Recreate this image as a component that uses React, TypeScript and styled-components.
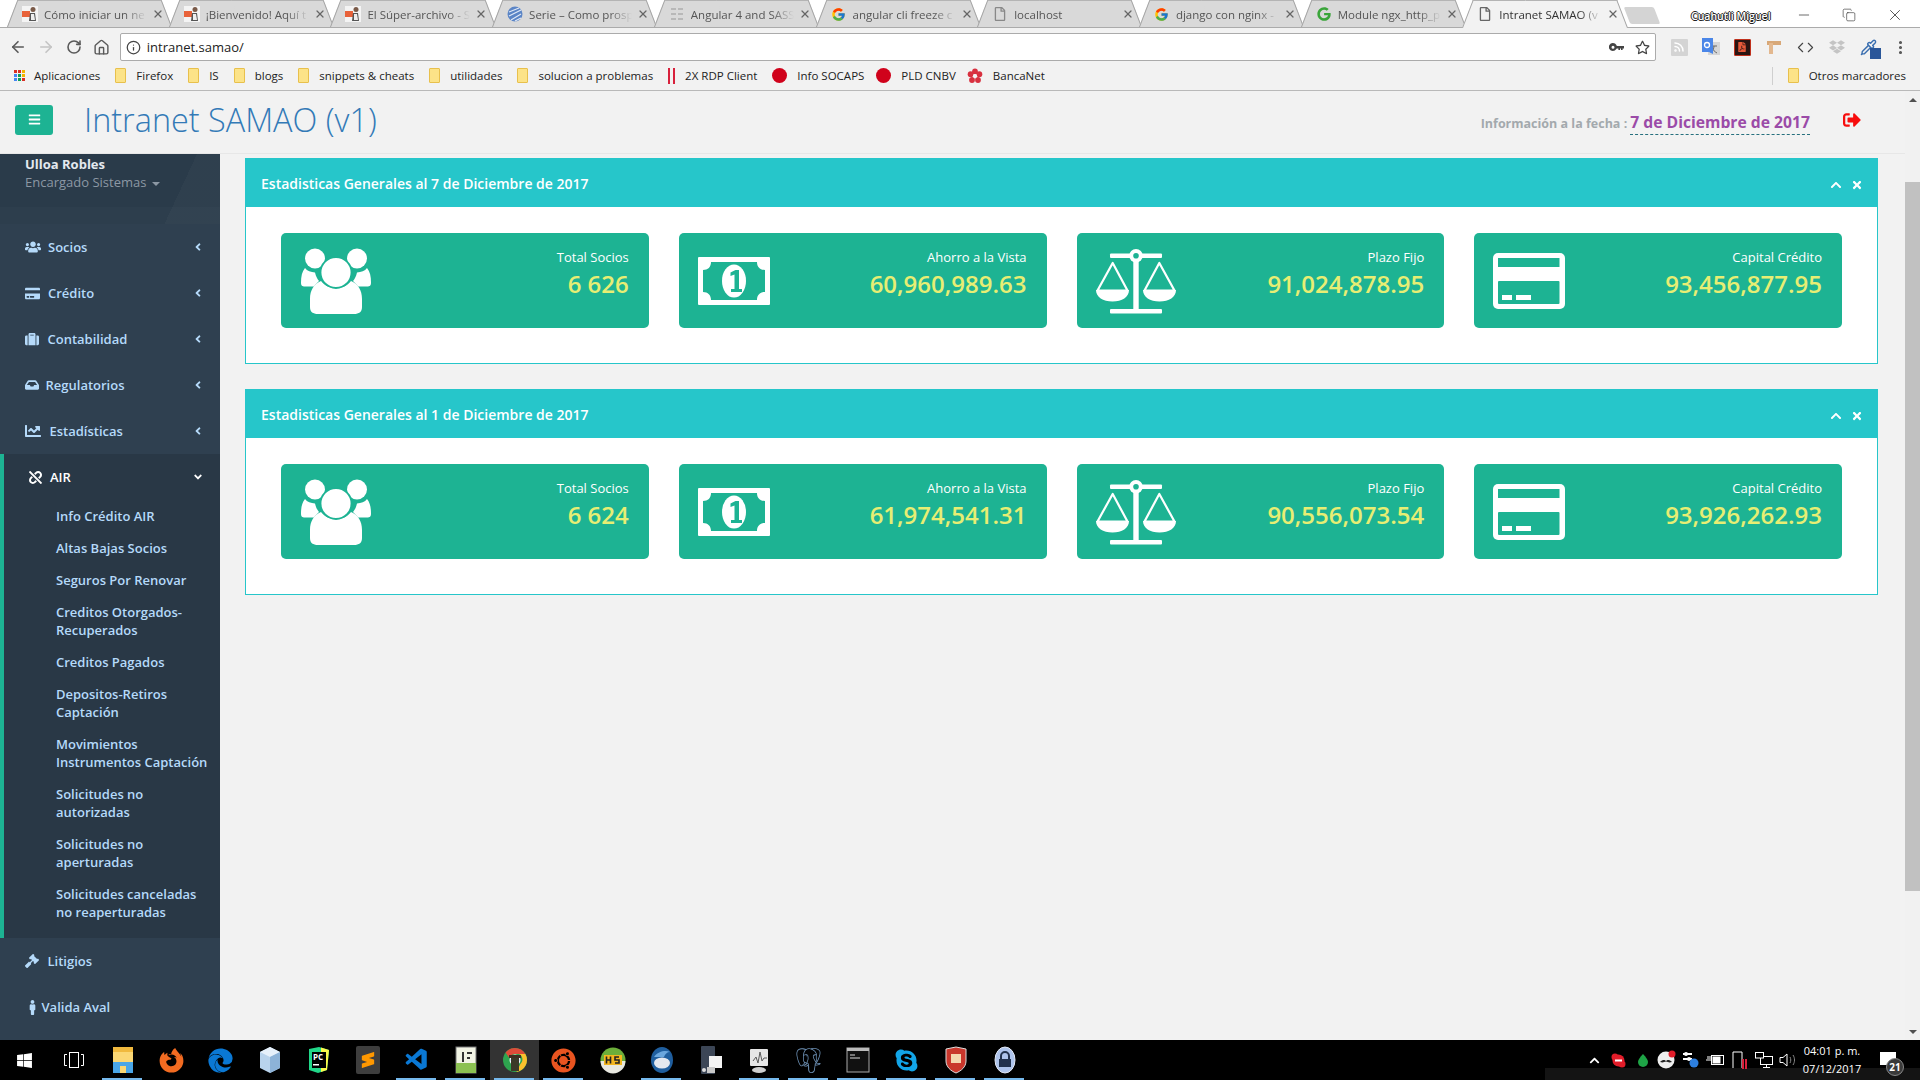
import { ReactNode } from "react";
import styled, { createGlobalStyle } from "styled-components";
import {
  ArrowLeft,
  ArrowRight,
  Code,
  Copy,
  EllipsisVertical,
  House,
  Info,
  Minus,
  Pipette,
  RotateCw,
  Rss,
  X,
} from "lucide-react";
import {
  FaAngleDown,
  FaAngleLeft,
  FaBars,
  FaChartLine,
  FaChevronUp,
  FaCreditCard,
  FaDropbox,
  FaEdge,
  FaFilePdf,
  FaFirefoxBrowser,
  FaGavel,
  FaGoogle,
  FaInbox,
  FaMale,
  FaRegFile,
  FaRegStar,
  FaSignOutAlt,
  FaSkype,
  FaSuitcase,
  FaTimes,
  FaUbuntu,
  FaUnlink,
  FaUsers,
  FaWindows,
} from "react-icons/fa";
import { FcGoogle } from "react-icons/fc";
import { SiPostgresql, SiSublimetext } from "react-icons/si";
import { VscVscode } from "react-icons/vsc";

const TEAL = "#26c6ca";
const GREEN = "#1db393";
const NAV = "#2f4050";
const NAV_DARK = "#293846";

const GlobalStyle = createGlobalStyle`
  html, body {
    margin: 0;
    padding: 0;
    height: 100%;
    overflow: hidden;
    background: #f2f2f2;
  }
  * {
    box-sizing: border-box;
  }
`;

const Screen = styled.div`
  display: flex;
  flex-direction: column;
  width: 1920px;
  height: 1080px;
  overflow: hidden;
  font-family: "Open Sans", "Noto Sans", sans-serif;
`;

/* ---- browser chrome ---- */

const TabStrip = styled.div`
  display: flex;
  align-items: flex-end;
  height: 28px;
  padding-left: 7px;
  background: linear-gradient(#fff 27px, #ababab 27px);
  flex: none;
`;

const Tab = styled.div<{ $active?: boolean }>`
  position: relative;
  display: flex;
  align-items: center;
  flex: none;
  width: 165px;
  height: 28px;
  margin-right: -3.3px;
  padding: 0 8px 0 15px;
  z-index: ${(p) => (p.$active ? 2 : 1)};

  &::before,
  &::after {
    content: "";
    position: absolute;
    top: 0;
    bottom: ${(p) => (p.$active ? "0" : "1px")};
    width: 55%;
    background: ${(p) => (p.$active ? "#f2f2f2" : "#d9d9d9")};
    border-top: 1px solid #b4b4b4;
    z-index: -1;
  }
  &::before {
    left: 0;
    border-left: 1px solid #a4a4a4;
    transform-origin: bottom left;
    transform: skewX(-21deg);
  }
  &::after {
    right: 0;
    border-right: 1px solid #a4a4a4;
    transform-origin: bottom right;
    transform: skewX(21deg);
  }
`;

const Favicon = styled.span`
  display: flex;
  align-items: center;
  justify-content: center;
  flex: none;
  width: 16px;
  height: 16px;
  margin-right: 6px;
`;

const TabTitle = styled.span<{ $active?: boolean }>`
  flex: 1;
  min-width: 0;
  overflow: hidden;
  white-space: nowrap;
  font-size: 11.5px;
  color: ${(p) => (p.$active ? "#333" : "#555")};
  -webkit-mask-image: linear-gradient(to right, #000 78%, transparent 100%);
  mask-image: linear-gradient(to right, #000 78%, transparent 100%);
`;

const TabClose = styled.span`
  display: flex;
  flex: none;
  width: 12px;
  margin-left: 5px;
  color: #666;
`;

const NewTab = styled.div`
  flex: none;
  width: 30px;
  height: 17px;
  margin: 0 0 4px 3px;
  background: #d4d4d4;
  border-radius: 2px;
  transform: skewX(21deg);
`;

const UserName = styled.div`
  margin-left: 34px;
  margin-bottom: 5px;
  width: 78px;
  font-size: 10.5px;
  font-weight: 600;
  color: #fff;
  white-space: nowrap;
  text-shadow: 1px 0 0 #222, -1px 0 0 #222, 0 1px 0 #222, 0 -1px 0 #222;
`;

const WindowButtons = styled.div`
  display: flex;
  align-items: center;
  height: 27px;
  margin-left: 27px;
  gap: 30px;
  color: #222;
`;

const Toolbar = styled.div`
  display: flex;
  align-items: center;
  height: 34px;
  padding: 4px 4px 0 4px;
  background: #f2f2f2;
  flex: none;
`;

const NavButton = styled.span<{ $dim?: boolean }>`
  display: flex;
  justify-content: center;
  width: 28px;
  color: ${(p) => (p.$dim ? "#c4c4c4" : "#5a5a5a")};
`;

const AddressBar = styled.div`
  display: flex;
  align-items: center;
  width: 1540px;
  height: 28px;
  margin-left: 4px;
  padding: 0 5px 0 5px;
  background: #fff;
  border: 1px solid #ababab;
  border-radius: 2px;
`;

const Url = styled.span`
  flex: 1;
  margin-left: 6px;
  font-size: 13px;
  color: #222;
`;

const StarSlot = styled.span`
  display: flex;
  margin-left: 11px;
  color: #444;
`;

const Extensions = styled.div`
  display: flex;
  align-items: center;
  margin-left: 7px;
`;

const ExtensionSlot = styled.span`
  position: relative;
  display: flex;
  align-items: center;
  justify-content: center;
  width: 31.6px;
  height: 24px;
`;

const ExtensionTile = styled.span<{ $bg: string; $edge?: string }>`
  display: flex;
  align-items: center;
  justify-content: center;
  width: 17px;
  height: 17px;
  background: ${(p) => p.$bg};
  border: ${(p) => (p.$edge ? `1px solid ${p.$edge}` : "none")};
  border-radius: 1px;
  color: #fff;
  font-size: 10px;
  font-weight: 700;
`;

const ExtensionBadge = styled.span`
  position: absolute;
  right: 3px;
  bottom: 0;
  width: 11px;
  height: 11px;
  background: #2a5699;
`;

const Bookmarks = styled.div`
  display: flex;
  align-items: center;
  height: 29px;
  padding: 0 14px 1px 14px;
  gap: 15px;
  background: #f2f2f2;
  border-bottom: 1px solid #b9b9b9;
  flex: none;
`;

const BookmarkItem = styled.span<{ $pull?: number }>`
  display: flex;
  align-items: center;
  gap: 10px;
  margin-left: ${(p) => -(p.$pull ?? 0)}px;
  font-size: 11.5px;
  color: #222;
  white-space: nowrap;
`;

const FolderIcon = styled.span`
  position: relative;
  flex: none;
  width: 11px;
  height: 15px;
  background: #fce388;
  border: 1px solid #e8c04c;
  border-radius: 1px;
`;

const AppsGrid = styled.span`
  display: grid;
  grid-template-columns: repeat(3, 3px);
  grid-auto-rows: 3px;
  gap: 1px;
  margin-right: -1px;
`;

const AppsDot = styled.span<{ $color: string }>`
  background: ${(p) => p.$color};
`;

const RedBars = styled.span`
  flex: none;
  width: 7px;
  height: 16px;
  border-left: 2px solid #d8213c;
  border-right: 2px solid #d8213c;
`;

const RedDot = styled.span`
  flex: none;
  width: 15px;
  height: 15px;
  border-radius: 50%;
  background: #d0021b;
`;

const BookmarkSpacer = styled.span`
  flex: 1;
`;

const BookmarkDivider = styled.span`
  width: 1px;
  height: 18px;
  background: #cfcfcf;
`;

/* ---- page ---- */

const Page = styled.div`
  display: flex;
  flex: 1;
  min-height: 0;
  background: #f2f2f2;
`;

const Content = styled.div`
  display: flex;
  flex-direction: column;
  flex: 1;
  min-width: 0;
`;

const TopBar = styled.header`
  display: flex;
  align-items: center;
  height: 63px;
  padding: 0 44px 0 15px;
  border-bottom: 1px solid #e7e7e7;
  flex: none;
`;

const MenuButton = styled.button`
  display: flex;
  align-items: center;
  justify-content: center;
  width: 38px;
  height: 30px;
  margin-top: -5px;
  padding: 0;
  border: none;
  border-radius: 3px;
  background: ${GREEN};
  color: #fff;
`;

const AppTitle = styled.h1`
  flex: 1;
  margin: -7px 0 0 31px;
  font-size: 32.4px;
  font-weight: 300;
  color: #337ab7;
`;

const DateLabel = styled.span`
  margin: 2px 3px 0 0;
  font-size: 12.5px;
  font-weight: 700;
  color: #a3a9ad;
`;

const DateValue = styled.a`
  margin-top: 2px;
  padding-bottom: 1px;
  font-size: 15.7px;
  font-weight: 700;
  color: #9b4ba8;
  border-bottom: 1px dashed #27707e;
`;

const Logout = styled.span`
  display: flex;
  margin: -5px 0 0 33px;
  color: #f70d0d;
`;

const Body = styled.div`
  display: flex;
  flex: 1;
  min-height: 0;
`;

const Sidebar = styled.nav`
  flex: none;
  width: 220px;
  overflow: hidden;
  background: ${NAV};
`;

const Profile = styled.div`
  height: 70px;
  padding: 1px 25px 0;
  background:
    linear-gradient(115deg, transparent 78%, rgba(255, 255, 255, 0.025) 78%),
    linear-gradient(#2a3b4a 53px, #2d3e4d 53px);
`;

const ProfileName = styled.div`
  font-size: 13px;
  line-height: 18px;
  font-weight: 700;
  color: #e4e9ef;
`;

const ProfileRole = styled.div`
  display: flex;
  align-items: center;
  gap: 6px;
  font-size: 13px;
  line-height: 19px;
  color: #8c98a4;
`;

const Caret = styled.span`
  width: 0;
  height: 0;
  margin-top: 2px;
  border-left: 4px solid transparent;
  border-right: 4px solid transparent;
  border-top: 4px solid #8c98a4;
`;

const MenuRow = styled.div<{ $open?: boolean }>`
  display: flex;
  align-items: center;
  height: 46px;
  padding: 0 16px 0 25px;
  font-size: 13px;
  font-weight: 600;
  color: ${(p) => (p.$open ? "#fff" : "#b5dafa")};
`;

const MenuIcon = styled.span<{ $width: number }>`
  display: flex;
  align-items: center;
  flex: none;
  width: ${(p) => p.$width}px;
`;

const MenuLabel = styled.span`
  flex: 1;
`;

const OpenGroup = styled.div`
  padding-bottom: 10px;
  background: ${NAV_DARK};
  border-left: 4px solid ${GREEN};
`;

const SubItem = styled.div`
  padding: 7px 6px 7px 52px;
  font-size: 13px;
  line-height: 18px;
  font-weight: 600;
  color: #b5dafa;
`;

const Main = styled.main`
  flex: 1;
  min-width: 0;
  padding: 4px 27px 0 25px;
`;

const Panel = styled.section`
  margin-bottom: 25px;
  background: #fff;
  border: 1px solid ${TEAL};
  border-top: none;
`;

const PanelHead = styled.div`
  display: flex;
  align-items: center;
  height: 49px;
  margin: 0 -1px;
  padding: 2px 15px 0 16px;
  background: ${TEAL};
  color: #fff;
`;

const PanelTitle = styled.h2`
  flex: 1;
  margin: 0;
  font-size: 14px;
  font-weight: 600;
`;

const PanelTool = styled.span`
  display: flex;
  margin-left: 9px;
  padding-top: 3px;
`;

const CardGrid = styled.div`
  display: grid;
  grid-template-columns: repeat(4, 1fr);
  gap: 30px;
  padding: 26px 35px 35px;
`;

const StatCard = styled.div`
  display: flex;
  align-items: center;
  justify-content: space-between;
  height: 95px;
  padding: 0 20px 0 19px;
  background: ${GREEN};
  border-radius: 5px;
`;

const StatText = styled.div`
  padding-bottom: 14px;
  text-align: right;
`;

const StatLabel = styled.div`
  font-size: 13px;
  line-height: 18px;
  color: #fff;
`;

const StatValue = styled.div`
  margin-top: 2px;
  font-size: 24px;
  line-height: 32px;
  font-weight: 600;
  color: #e7ee73;
`;

const Scrollbar = styled.div`
  display: flex;
  flex-direction: column;
  align-items: center;
  flex: none;
  width: 15px;
  padding-top: 7px;
  background: #f1f1f1;
`;

const ScrollArrow = styled.span<{ $down?: boolean }>`
  width: 0;
  height: 0;
  border-left: 4px solid transparent;
  border-right: 4px solid transparent;
  border-${(p) => (p.$down ? "top" : "bottom")}: 4px solid #505050;
`;

const ScrollThumb = styled.div`
  width: 15px;
  height: 709px;
  margin: 80px 0 139px;
  background: #c1c1c1;
`;

/* ---- taskbar ---- */

const Taskbar = styled.footer`
  display: flex;
  align-items: stretch;
  height: 40px;
  background: #000;
  flex: none;
`;

const TaskButtons = styled.div`
  display: flex;
  flex: 1;
`;

const TaskButton = styled.div<{ $running?: boolean; $active?: boolean }>`
  position: relative;
  display: flex;
  align-items: center;
  justify-content: center;
  flex: none;
  width: 49px;
  background: ${(p) => (p.$active ? "#333" : "transparent")};

  &::after {
    content: "";
    position: absolute;
    left: 4px;
    right: 5px;
    bottom: 0;
    height: 2px;
    background: ${(p) => (p.$running ? "#76b9ed" : "transparent")};
  }
`;

const SublimeTile = styled.span`
  display: flex;
  align-items: center;
  justify-content: center;
  width: 24px;
  height: 28px;
  background: #3e3e3e;
  border-radius: 2px;
`;

const Tray = styled.div`
  display: flex;
  align-items: center;
  padding: 0 24px 0 37px;
  background: linear-gradient(#000 28px, #141414 28px);
  color: #fff;
`;

const TrayIcon = styled.span`
  display: flex;
  align-items: center;
  justify-content: center;
  width: 24.2px;
`;

const Clock = styled.div`
  width: 64px;
  font-size: 11px;
  line-height: 18px;
  text-align: center;
  color: #fff;
  white-space: nowrap;
`;

const NotifyIcon = styled.span`
  position: relative;
  display: flex;
  width: 16px;
  height: 13px;
  margin-left: 16px;
  margin-bottom: 4px;
  background: #fff;
`;

const NotifyBadge = styled.span`
  position: absolute;
  left: 6px;
  top: 6px;
  display: flex;
  align-items: center;
  justify-content: center;
  width: 18px;
  height: 18px;
  border-radius: 50%;
  border: 1px solid #888;
  background: #3a3a3a;
  color: #fff;
  font-size: 10px;
  font-weight: 700;
`;

/* ---- drawings ---- */

function BlogFavicon() {
  return (
    <svg width="16" height="16" viewBox="0 0 16 16">
      <rect width="16" height="16" fill="#f4f4f4" />
      <rect x="0" y="5" width="8" height="6" fill="#e8623a" />
      <circle cx="11" cy="3.5" r="2.5" fill="#7a5a48" />
      <path d="M8 7h5l1 8H7z" fill="#555" />
      <path d="M9 8h3l1 6H9z" fill="#eee" />
    </svg>
  );
}

function GlobeFavicon() {
  return (
    <svg width="16" height="16" viewBox="0 0 16 16">
      <circle cx="8" cy="8" r="7.5" fill="#5b85c6" />
      <path d="M2 6l10-4M2 10l12-6M4 14l10-6M8 15l6-3" stroke="#dfe8f6" strokeWidth="1.2" />
    </svg>
  );
}

function GridFavicon() {
  return (
    <svg width="14" height="14" viewBox="0 0 14 14" fill="#b8b8b8">
      <rect x="1" y="1" width="5" height="2" />
      <rect x="8" y="1" width="5" height="2" />
      <rect x="1" y="6" width="5" height="2" />
      <rect x="8" y="6" width="5" height="2" />
      <rect x="1" y="11" width="5" height="2" />
      <rect x="8" y="11" width="5" height="2" />
    </svg>
  );
}

function KeyIcon() {
  return (
    <svg width="15" height="9" viewBox="0 0 15 9" fill="#444">
      <path d="M4 0a4 4 0 1 1-3.6 6A4 4 0 0 1 4 0zm0 2.7a1.5 1.5 0 1 0 0 3 1.5 1.5 0 0 0 0-3z" />
      <path d="M7 3h8v2.5h-1.4V7h-1.6V5.5h-1V7H9.4V5.5H7z" />
    </svg>
  );
}

function WoodIcon() {
  return (
    <svg width="16" height="16" viewBox="0 0 16 16">
      <rect x="1" y="2" width="14" height="4" fill="#d8a878" />
      <rect x="3" y="4" width="4" height="11" fill="#e3b88f" />
    </svg>
  );
}

function TranslateIcon() {
  return (
    <svg width="18" height="18" viewBox="0 0 18 18">
      <rect x="6" y="4" width="12" height="13" fill="#d6d6d6" />
      <path d="M9 8h6M12 8c0 3-1.500 5-3.500 6M10 10c1 2 3 4 5 5" stroke="#666" fill="none" />
      <path d="M0 0h11v16l-4-2H0z" fill="#4a86e8" />
      <circle cx="5" cy="7" r="2.500" fill="none" stroke="#fff" strokeWidth="1.300" />
    </svg>
  );
}

function BancaNetIcon() {
  return (
    <svg width="16" height="16" viewBox="0 0 16 16" fill="#d8303f">
      <circle cx="8" cy="3.4" r="2.9" />
      <circle cx="12.4" cy="6.2" r="2.9" />
      <circle cx="11" cy="12" r="2.9" />
      <circle cx="5" cy="12" r="2.9" />
      <circle cx="3.6" cy="6.2" r="2.9" />
      <circle cx="8" cy="8" r="2" fill="#f2f2f2" />
    </svg>
  );
}

function UsersDrawing() {
  return (
    <svg width="72" height="72" viewBox="0 0 72 72" fill="#fff">
      <circle cx="15" cy="13.5" r="10" />
      <circle cx="57" cy="13.5" r="10" />
      <path d="M5 23c2 3 6 4 10 4.500 1 4 2 6 4 8.500-2 2-4 4-5 5.500H5c-3 0-4-1-4-4 0-6 1-11 4-14.500z" />
      <path d="M67 23c-2 3-6 4-10 4.500-1 4-2 6-4 8.500 2 2 4 4 5 5.500h9c3 0 4-1 4-4 0-6-1-11-4-14.500z" />
      <path d="M21 36c4 5 9 7 15 7s11-2 15-7c7 3 11 9 11 18v8c0 5-3 7-8 7H18c-5 0-8-2-8-7v-8c0-9 4-15 11-18z" />
      <circle cx="36" cy="27.500" r="15.500" stroke={GREEN} strokeWidth="1.800" />
    </svg>
  );
}

function MoneyDrawing() {
  return (
    <svg width="72" height="48" viewBox="0 0 72 48">
      <rect width="72" height="48" rx="1" fill="#fff" />
      <path
        d="M13 5h46c0 5 3 8 8 8v22c-5 0-8 3-8 8H13c0-5-3-8-8-8V13c5 0 8-3 8-8z"
        fill={GREEN}
      />
      <ellipse cx="36" cy="24" rx="12" ry="16.500" fill="#fff" />
      <path
        d="M32.500 15.500l5-2.500h3.500v19h3v3h-11v-3h3.500V17.500l-4 1.500z"
        fill={GREEN}
      />
    </svg>
  );
}

function ScaleDrawing() {
  return (
    <svg width="80" height="72" viewBox="0 0 80 72" fill="#fff">
      <rect x="14" y="8.500" width="52" height="4.500" rx="1" />
      <rect x="37.300" y="10" width="5.400" height="55" />
      <rect x="14" y="64" width="52" height="4.500" rx="1" />
      <circle cx="40" cy="10.800" r="6.800" />
      <circle cx="40" cy="10.800" r="2.800" fill={GREEN} />
      <path d="M16.700 18L1.500 45.500h30z" fill="none" stroke="#fff" strokeWidth="2.200" strokeLinejoin="round" />
      <path d="M63.300 18L48.500 45.500h30z" fill="none" stroke="#fff" strokeWidth="2.200" strokeLinejoin="round" />
      <path d="M0 45h33c0 7-7 11.500-16.500 11.500S0 52 0 45z" />
      <path d="M47 45h33c0 7-7 11.500-16.500 11.500S47 52 47 45z" />
    </svg>
  );
}

function CardDrawing() {
  return (
    <svg width="72" height="56" viewBox="0 0 72 56">
      <rect width="72" height="56" rx="5" fill="#fff" />
      <rect x="5" y="5" width="61.500" height="9" fill={GREEN} />
      <rect x="5" y="28" width="61.500" height="23" rx="1" fill={GREEN} />
      <rect x="9" y="42" width="10" height="5" fill="#fff" />
      <rect x="23" y="42" width="15" height="5" fill="#fff" />
    </svg>
  );
}

function ChromeIcon() {
  return (
    <svg width="26" height="28" viewBox="0 0 26 28">
      <circle cx="13" cy="14" r="12" fill="#2ea44f" />
      <path d="M13 2a12 12 0 0 1 10.400 6H13a6 6 0 0 0-5.700 4L3.500 6.500A12 12 0 0 1 13 2z" fill="#dd4b39" />
      <path d="M23.400 8a12 12 0 0 1-9 17.900l4-8A6 6 0 0 0 17 8z" fill="#fbc02d" />
      <circle cx="13" cy="14" r="5.500" fill="#fff" />
      <circle cx="13" cy="14" r="4.300" fill="#4285f4" />
      <rect x="7" y="9" width="12" height="3" fill="#3e2e22" />
      <rect x="9" y="12" width="8" height="13" fill="#3b3a28" />
    </svg>
  );
}

function BoxIcon() {
  return (
    <svg width="22" height="28" viewBox="0 0 22 28">
      <path d="M11 1l10 5v16l-10 5-10-5V6z" fill="#b9d3ec" />
      <path d="M11 1l10 5-10 5L1 6z" fill="#e6f0fa" />
      <path d="M11 11l10-5v16l-10 5z" fill="#8db3d8" />
    </svg>
  );
}

function ExplorerIcon() {
  return (
    <svg width="24" height="28" viewBox="0 0 24 28">
      <rect x="2" y="1" width="20" height="26" fill="#fbd774" />
      <rect x="2" y="1" width="20" height="5" fill="#f0b93e" />
      <rect x="2" y="16" width="20" height="11" fill="#4aa6e8" />
      <rect x="9" y="20" width="6" height="7" fill="#fbd774" />
    </svg>
  );
}

function PycharmIcon() {
  return (
    <svg width="24" height="28" viewBox="0 0 24 28">
      <path d="M2 3l10-2 10 3-2 20-9 3-9-3z" fill="#21d789" />
      <path d="M14 1.500l8 2.500-2 20-6 2z" fill="#fcf84a" />
      <rect x="5" y="6" width="14" height="16" fill="#000" />
      <text x="6" y="14" fontSize="8" fontWeight="700" fill="#fff" fontFamily="Open Sans, sans-serif">
        PC
      </text>
      <rect x="6" y="18" width="6" height="1.500" fill="#fff" />
    </svg>
  );
}

function NotepadIcon() {
  return (
    <svg width="22" height="28" viewBox="0 0 22 28">
      <rect x="1" y="1" width="20" height="26" fill="#f1f3e4" stroke="#777" />
      <rect x="1" y="17" width="20" height="10" fill="#8cc152" />
      <path d="M7 6h2v10H7zM12 6h5v2h-5zM12 11h3v2h-3z" fill="#333" />
    </svg>
  );
}

function HsIcon() {
  return (
    <svg width="26" height="28" viewBox="0 0 26 28">
      <circle cx="13" cy="14" r="12.500" fill="#6cae3a" />
      <path d="M.5 15a12.500 12.500 0 0 0 25 0z" fill="#e8e8e0" />
      <rect x="4" y="9" width="18" height="10" fill="#f3b61f" />
      <path d="M6.500 10.500v7M10.500 10.500v7M6.500 14h4M19 11h-4v3h4v3h-4" stroke="#222" strokeWidth="1.600" fill="none" />
    </svg>
  );
}

function ThunderbirdIcon() {
  return (
    <svg width="24" height="28" viewBox="0 0 24 28">
      <ellipse cx="12" cy="14" rx="11" ry="13" fill="#1f5e9e" />
      <ellipse cx="12" cy="17" rx="8" ry="5.500" fill="#e4e8ef" />
      <path d="M4 11c4-6 12-7 16-5-3 0-5 2-6 5z" fill="#6aa6dd" />
    </svg>
  );
}

function DevicesIcon() {
  return (
    <svg width="26" height="28" viewBox="0 0 26 28">
      <rect x="3" y="0" width="14" height="28" rx="1" fill="#3c4656" />
      <rect x="11" y="10" width="13" height="12" fill="#f3f3f3" />
      <rect x="9" y="21" width="8" height="6" fill="#c8c8c8" />
      <circle cx="6" cy="24" r="2" fill="#ddd" />
    </svg>
  );
}

function MonitorIcon() {
  return (
    <svg width="26" height="28" viewBox="0 0 26 28">
      <rect x="3" y="3" width="18" height="17" rx="1" fill="#e6e6e6" />
      <path d="M6 15l3-4 2 6 2-11 2 9 2-3h3" fill="none" stroke="#5a5a5a" />
      <ellipse cx="12" cy="24" rx="7" ry="3" fill="#cfcfcf" />
    </svg>
  );
}

function TerminalIcon() {
  return (
    <svg width="24" height="26" viewBox="0 0 24 26">
      <rect x="1" y="1" width="22" height="24" fill="#111" stroke="#aaa" />
      <rect x="1" y="1" width="22" height="3" fill="#bbb" />
      <path d="M4 8h5M4 11h10" stroke="#ddd" />
    </svg>
  );
}

function ShieldIcon() {
  return (
    <svg width="22" height="28" viewBox="0 0 22 28">
      <path d="M1 3l10-2 10 2v12c0 6-5 10-10 12C6 25 1 21 1 15z" fill="#c9372c" stroke="#ddd" />
      <rect x="6" y="8" width="10" height="9" fill="#f4d7b0" />
    </svg>
  );
}

function LockIcon() {
  return (
    <svg width="22" height="28" viewBox="0 0 22 28">
      <ellipse cx="11" cy="14" rx="10" ry="13" fill="#aec4ec" stroke="#e3e9f6" />
      <path d="M7 13v-3a4 4 0 0 1 8 0v3" fill="none" stroke="#22324d" strokeWidth="2" />
      <rect x="5" y="13" width="12" height="8" fill="#22324d" />
    </svg>
  );
}

function SkypeTray() {
  return (
    <svg width="15" height="15" viewBox="0 0 15 15">
      <circle cx="4" cy="4" r="3.500" fill="#e21d2a" />
      <circle cx="11" cy="11" r="3.500" fill="#e21d2a" />
      <circle cx="7.500" cy="7.500" r="6" fill="#e21d2a" />
      <rect x="4" y="6.500" width="7" height="2" fill="#fff" />
    </svg>
  );
}

function BatteryTray() {
  return (
    <svg width="20" height="12" viewBox="0 0 20 12" fill="none" stroke="#fff">
      <path d="M1 6h5M3 2v3M5 2v3" />
      <rect x="6.500" y="1.500" width="12" height="9" />
      <rect x="8" y="3" width="7" height="6" fill="#fff" />
    </svg>
  );
}

function NetworkTray() {
  return (
    <svg width="16" height="18" viewBox="0 0 16 18" fill="none">
      <path d="M1 17V1h9v16" stroke="#fff" />
      <rect x="10" y="8" width="2" height="10" fill="#d8213c" />
      <rect x="13" y="8" width="2" height="10" fill="#d8213c" />
    </svg>
  );
}

function ScreensTray() {
  return (
    <svg width="18" height="16" viewBox="0 0 18 16" fill="none" stroke="#fff">
      <rect x="5.500" y="4.500" width="12" height="8" />
      <rect x="0.500" y="0.500" width="8" height="5.500" fill="#000" />
      <path d="M11.500 12.500v3M8 15.500h7" />
    </svg>
  );
}

function VolumeTray() {
  return (
    <svg width="18" height="14" viewBox="0 0 18 14" fill="none" stroke="#fff">
      <path d="M1 4.500h3L8 1v12L4 9.500H1z" />
      <path d="M11 4c1 2 1 4 0 6M14 2c2 3 2 7 0 10" stroke="#888" />
    </svg>
  );
}

function FaceTray() {
  return (
    <svg width="20" height="20" viewBox="0 0 20 20">
      <circle cx="9" cy="10" r="8.500" fill="#eee" />
      <path d="M3 12c3-3 5-2 6-1 1-1 3-2 6 1-3 1-4 0-6-.500-2 .500-3 1.500-6 .500z" fill="#222" />
      <circle cx="15" cy="4" r="3.500" fill="#e21d2a" />
    </svg>
  );
}

function SyncTray() {
  return (
    <svg width="16" height="16" viewBox="0 0 16 16">
      <path d="M0 2h9M0 7h9" stroke="#fff" strokeWidth="2" />
      <circle cx="3" cy="2" r="2" fill="#fff" />
      <circle cx="6" cy="7" r="2" fill="#fff" />
      <circle cx="11" cy="11" r="4.500" fill="#2d7fe0" />
    </svg>
  );
}

/* ---- data ---- */

type TabData = { title: string; icon: ReactNode; active?: boolean };

const TABS: TabData[] = [
  { title: "Cómo iniciar un ne", icon: <BlogFavicon /> },
  { title: "¡Bienvenido! Aquí t", icon: <BlogFavicon /> },
  { title: "El Súper-archivo - S", icon: <BlogFavicon /> },
  { title: "Serie – Como prosp", icon: <GlobeFavicon /> },
  { title: "Angular 4 and SASS", icon: <GridFavicon /> },
  { title: "angular cli freeze c", icon: <FcGoogle size={15} /> },
  { title: "localhost", icon: <FaRegFile size={14} color="#888" /> },
  { title: "django con nginx -", icon: <FcGoogle size={15} /> },
  { title: "Module ngx_http_p", icon: <FaGoogle size={14} color="#3aa53a" /> },
  { title: "Intranet SAMAO (v", icon: <FaRegFile size={14} color="#666" />, active: true },
];

const BOOKMARKS = [
  "Firefox",
  "IS",
  "blogs",
  "snippets & cheats",
  "utilidades",
  "solucion a problemas",
];

const APP_DOTS = [
  "#d93025", "#d93025", "#f4b400",
  "#4285f4", "#0f9d58", "#f4b400",
  "#4285f4", "#0f9d58", "#d93025",
];

const MENU_TOP = [
  { label: "Socios", width: 23, icon: <FaUsers size={16} /> },
  { label: "Crédito", width: 23, icon: <FaCreditCard size={15} /> },
  { label: "Contabilidad", width: 22.5, icon: <FaSuitcase size={14} /> },
  { label: "Regulatorios", width: 20.5, icon: <FaInbox size={14} /> },
  { label: "Estadísticas", width: 24.5, icon: <FaChartLine size={16} /> },
];

const SUB_ITEMS = [
  "Info Crédito AIR",
  "Altas Bajas Socios",
  "Seguros Por Renovar",
  "Creditos Otorgados-Recuperados",
  "Creditos Pagados",
  "Depositos-Retiros Captación",
  "Movimientos Instrumentos Captación",
  "Solicitudes no autorizadas",
  "Solicitudes no aperturadas",
  "Solicitudes canceladas no reaperturadas",
];

const PANELS = [
  {
    title: "Estadisticas Generales al 7 de Diciembre de 2017",
    values: ["6 626", "60,960,989.63", "91,024,878.95", "93,456,877.95"],
  },
  {
    title: "Estadisticas Generales al 1 de Diciembre de 2017",
    values: ["6 624", "61,974,541.31", "90,556,073.54", "93,926,262.93"],
  },
];

const STATS = [
  { label: "Total Socios", drawing: <UsersDrawing /> },
  { label: "Ahorro a la Vista", drawing: <MoneyDrawing /> },
  { label: "Plazo Fijo", drawing: <ScaleDrawing /> },
  { label: "Capital Crédito", drawing: <CardDrawing /> },
];

const TASK_ITEMS: { icon: ReactNode; running?: boolean; active?: boolean }[] = [
  { icon: <FaWindows size={17} color="#fff" /> },
  {
    icon: (
      <svg width="20" height="16" viewBox="0 0 20 16" fill="none" stroke="#fff">
        <rect x="5.500" y="0.500" width="9" height="15" />
        <path d="M3 2.500H.500v11H3M17 2.500h2.500v11H17" />
      </svg>
    ),
  },
  { icon: <ExplorerIcon />, running: true },
  { icon: <FaFirefoxBrowser size={25} color="#f26b21" /> },
  { icon: <FaEdge size={25} color="#0a78d4" /> },
  { icon: <BoxIcon /> },
  { icon: <PycharmIcon /> },
  {
    icon: (
      <SublimeTile>
        <SiSublimetext size={16} color="#ff9800" />
      </SublimeTile>
    ),
  },
  { icon: <VscVscode size={26} color="#0a78d4" />, running: true },
  { icon: <NotepadIcon />, running: true },
  { icon: <ChromeIcon />, running: true, active: true },
  { icon: <FaUbuntu size={25} color="#e95420" />, running: true },
  { icon: <HsIcon /> },
  { icon: <ThunderbirdIcon />, running: true },
  { icon: <DevicesIcon /> },
  { icon: <MonitorIcon />, running: true },
  { icon: <SiPostgresql size={25} color="#6f93b8" />, running: true },
  { icon: <TerminalIcon />, running: true },
  { icon: <FaSkype size={25} color="#12a5e8" />, running: true },
  { icon: <ShieldIcon />, running: true },
  { icon: <LockIcon />, running: true },
];

const TRAY_ICONS: ReactNode[] = [
  <FaChevronUp size={11} key="up" />,
  <SkypeTray key="skype" />,
  <svg width="10" height="13" viewBox="0 0 10 13" key="drop">
    <path d="M5 0c3 3 5 6 5 8a5 5 0 0 1-10 0c0-2 2-5 5-8z" fill="#1ea446" />
  </svg>,
  <FaceTray key="face" />,
  <SyncTray key="sync" />,
  <BatteryTray key="battery" />,
  <NetworkTray key="network" />,
  <ScreensTray key="screens" />,
  <VolumeTray key="volume" />,
];

function App() {
  return (
    <Screen>
      <GlobalStyle />

      <TabStrip>
        {TABS.map((tab) => (
          <Tab key={tab.title} $active={tab.active}>
            <Favicon>{tab.icon}</Favicon>
            <TabTitle $active={tab.active}>{tab.title}</TabTitle>
            <TabClose>
              <X size={12} strokeWidth={2.5} />
            </TabClose>
          </Tab>
        ))}
        <NewTab />
        <UserName>Cuahutli Miguel</UserName>
        <WindowButtons>
          <Minus size={16} strokeWidth={1} />
          <Copy size={14} strokeWidth={1} />
          <X size={18} strokeWidth={1} />
        </WindowButtons>
      </TabStrip>

      <Toolbar>
        <NavButton>
          <ArrowLeft size={18} strokeWidth={2.2} />
        </NavButton>
        <NavButton $dim>
          <ArrowRight size={18} strokeWidth={2.2} />
        </NavButton>
        <NavButton>
          <RotateCw size={16} strokeWidth={2.4} />
        </NavButton>
        <NavButton>
          <House size={17} strokeWidth={2} />
        </NavButton>
        <AddressBar>
          <Info size={15} color="#444" />
          <Url>intranet.samao/</Url>
          <KeyIcon />
          <StarSlot>
            <FaRegStar size={15} />
          </StarSlot>
        </AddressBar>
        <Extensions>
          <ExtensionSlot>
            <ExtensionTile $bg="#d4d4d4">
              <Rss size={12} strokeWidth={3} />
            </ExtensionTile>
          </ExtensionSlot>
          <ExtensionSlot>
            <TranslateIcon />
          </ExtensionSlot>
          <ExtensionSlot>
            <ExtensionTile $bg="#2a1512" $edge="#c0301c">
              <FaFilePdf size={10} color="#e65a3a" />
            </ExtensionTile>
          </ExtensionSlot>
          <ExtensionSlot>
            <WoodIcon />
          </ExtensionSlot>
          <ExtensionSlot>
            <Code size={17} color="#444" strokeWidth={1.6} />
          </ExtensionSlot>
          <ExtensionSlot>
            <FaDropbox size={16} color="#c4c4c4" />
          </ExtensionSlot>
          <ExtensionSlot>
            <Pipette size={17} color="#3b6fb0" />
            <ExtensionBadge />
          </ExtensionSlot>
          <ExtensionSlot>
            <EllipsisVertical size={17} color="#555" strokeWidth={2.4} />
          </ExtensionSlot>
        </Extensions>
      </Toolbar>

      <Bookmarks>
        <BookmarkItem>
          <AppsGrid>
            {APP_DOTS.map((color, i) => (
              <AppsDot key={i} $color={color} />
            ))}
          </AppsGrid>
          Aplicaciones
        </BookmarkItem>
        {BOOKMARKS.map((name) => (
          <BookmarkItem key={name}>
            <FolderIcon />
            {name}
          </BookmarkItem>
        ))}
        <BookmarkItem>
          <RedBars />
          2X RDP Client
        </BookmarkItem>
        <BookmarkItem>
          <RedDot />
          Info SOCAPS
        </BookmarkItem>
        <BookmarkItem $pull={3}>
          <RedDot />
          PLD CNBV
        </BookmarkItem>
        <BookmarkItem $pull={4}>
          <BancaNetIcon />
          BancaNet
        </BookmarkItem>
        <BookmarkSpacer />
        <BookmarkDivider />
        <BookmarkItem>
          <FolderIcon />
          Otros marcadores
        </BookmarkItem>
      </Bookmarks>

      <Page>
        <Content>
          <TopBar>
            <MenuButton>
              <FaBars size={13} />
            </MenuButton>
            <AppTitle>Intranet SAMAO (v1)</AppTitle>
            <DateLabel>Información a la fecha :</DateLabel>
            <DateValue>7 de Diciembre de 2017</DateValue>
            <Logout>
              <FaSignOutAlt size={18} />
            </Logout>
          </TopBar>
          <Body>
            <Sidebar>
              <Profile>
                <ProfileName>Ulloa Robles</ProfileName>
                <ProfileRole>
                  Encargado Sistemas
                  <Caret />
                </ProfileRole>
              </Profile>
              {MENU_TOP.map((item) => (
                <MenuRow key={item.label}>
                  <MenuIcon $width={item.width}>{item.icon}</MenuIcon>
                  <MenuLabel>{item.label}</MenuLabel>
                  <FaAngleLeft size={12} />
                </MenuRow>
              ))}
              <OpenGroup>
                <MenuRow $open>
                  <MenuIcon $width={21}>
                    <FaUnlink size={13} />
                  </MenuIcon>
                  <MenuLabel>AIR</MenuLabel>
                  <FaAngleDown size={12} />
                </MenuRow>
                {SUB_ITEMS.map((name) => (
                  <SubItem key={name}>{name}</SubItem>
                ))}
              </OpenGroup>
              <MenuRow>
                <MenuIcon $width={22.5}>
                  <FaGavel size={14} />
                </MenuIcon>
                <MenuLabel>Litigios</MenuLabel>
              </MenuRow>
              <MenuRow>
                <MenuIcon $width={16.5}>
                  <FaMale size={15} />
                </MenuIcon>
                <MenuLabel>Valida Aval</MenuLabel>
              </MenuRow>
            </Sidebar>
            <Main>
              {PANELS.map((panel) => (
                <Panel key={panel.title}>
                  <PanelHead>
                    <PanelTitle>{panel.title}</PanelTitle>
                    <PanelTool>
                      <FaChevronUp size={12} />
                    </PanelTool>
                    <PanelTool>
                      <FaTimes size={12} />
                    </PanelTool>
                  </PanelHead>
                  <CardGrid>
                    {STATS.map((stat, i) => (
                      <StatCard key={stat.label}>
                        {stat.drawing}
                        <StatText>
                          <StatLabel>{stat.label}</StatLabel>
                          <StatValue>{panel.values[i]}</StatValue>
                        </StatText>
                      </StatCard>
                    ))}
                  </CardGrid>
                </Panel>
              ))}
            </Main>
          </Body>
        </Content>
        <Scrollbar>
          <ScrollArrow />
          <ScrollThumb />
          <ScrollArrow $down />
        </Scrollbar>
      </Page>

      <Taskbar>
        <TaskButtons>
          {TASK_ITEMS.map((item, i) => (
            <TaskButton key={i} $running={item.running} $active={item.active}>
              {item.icon}
            </TaskButton>
          ))}
        </TaskButtons>
        <Tray>
          {TRAY_ICONS.map((icon, i) => (
            <TrayIcon key={i}>{icon}</TrayIcon>
          ))}
          <Clock>
            04:01 p. m.
            <br />
            07/12/2017
          </Clock>
          <NotifyIcon>
            <NotifyBadge>21</NotifyBadge>
          </NotifyIcon>
        </Tray>
      </Taskbar>
    </Screen>
  );
}

export default App;
